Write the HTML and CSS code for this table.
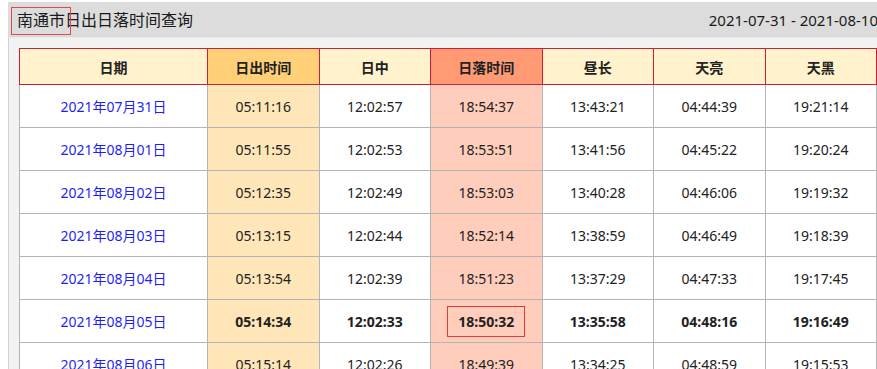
FILE: index.html
```html
<!DOCTYPE html>
<html lang="zh-CN">
<head>
<meta charset="utf-8">
<title>南通市日出日落时间查询</title>
<link rel="stylesheet" href="styles.css">
</head>
<body>
<div class="page">
  <div class="bar">
    <h1 class="title"><span class="city">南通市</span>日出日落时间查询</h1>
    <div class="range">2021-07-31 - 2021-08-10</div>
  </div>
  <div class="content">
    <table class="sun">
      <colgroup>
        <col class="c-date"><col><col><col><col><col><col>
      </colgroup>
      <thead>
        <tr>
          <th>日期</th>
          <th class="rise">日出时间</th>
          <th>日中</th>
          <th class="set">日落时间</th>
          <th>昼长</th>
          <th>天亮</th>
          <th>天黑</th>
        </tr>
      </thead>
      <tbody>
        <tr><td class="date">2021年07月31日</td><td class="rise">05:11:16</td><td>12:02:57</td><td class="set">18:54:37</td><td>13:43:21</td><td>04:44:39</td><td>19:21:14</td></tr>
        <tr><td class="date">2021年08月01日</td><td class="rise">05:11:55</td><td>12:02:53</td><td class="set">18:53:51</td><td>13:41:56</td><td>04:45:22</td><td>19:20:24</td></tr>
        <tr><td class="date">2021年08月02日</td><td class="rise">05:12:35</td><td>12:02:49</td><td class="set">18:53:03</td><td>13:40:28</td><td>04:46:06</td><td>19:19:32</td></tr>
        <tr><td class="date">2021年08月03日</td><td class="rise">05:13:15</td><td>12:02:44</td><td class="set">18:52:14</td><td>13:38:59</td><td>04:46:49</td><td>19:18:39</td></tr>
        <tr><td class="date">2021年08月04日</td><td class="rise">05:13:54</td><td>12:02:39</td><td class="set">18:51:23</td><td>13:37:29</td><td>04:47:33</td><td>19:17:45</td></tr>
        <tr class="today"><td class="date">2021年08月05日</td><td class="rise">05:14:34</td><td>12:02:33</td><td class="set"><span class="mark">18:50:32</span></td><td>13:35:58</td><td>04:48:16</td><td>19:16:49</td></tr>
        <tr><td class="date">2021年08月06日</td><td class="rise">05:15:14</td><td>12:02:26</td><td class="set">18:49:39</td><td>13:34:25</td><td>04:48:59</td><td>19:15:53</td></tr>
      </tbody>
    </table>
  </div>
</div>
</body>
</html>
```

FILE: styles.css
```css
html, body {
  margin: 0;
  padding: 0;
  background: #ffffff;
  font-family: "Noto Sans", "Noto Sans CJK SC", sans-serif;
  color: #222222;
  overflow: hidden;
}

.page {
  padding: 2px 0 0 8px;
}

.bar {
  height: 35px;
  background: #dcdcdc;
  display: flex;
  align-items: center;
  justify-content: space-between;
  padding-left: 9px;
  white-space: nowrap;
}

.title {
  margin: 0;
  font-size: 16px;
  font-weight: normal;
  line-height: 20px;
  color: #1a1a1a;
}

.city {
  position: relative;
}

.city::after {
  content: "";
  position: absolute;
  left: -6px;
  top: -2px;
  width: 58px;
  height: 26px;
  border: 1px solid #e04a4a;
}

.range {
  font-size: 15px;
  line-height: 20px;
  color: #1a1a1a;
  margin-right: -1px;
}

.content {
  background: #f2f2f2;
  border-left: 1px solid #d2d2d2;
  border-top: 1px solid #e8e8e8;
  padding: 10px 0 0 10px;
  height: 400px;
}

.sun {
  width: 858px;
  table-layout: fixed;
  border-collapse: collapse;
  background: #ffffff;
  font-size: 14px;
}

.c-date {
  width: 188px;
}

.sun th {
  height: 35px;
  padding: 0;
  background: #fff2cc;
  border: 1px solid #c8203a;
  font-weight: bold;
  color: #222222;
  text-align: center;
}

.sun th.rise {
  background: #ffd078;
}

.sun th.set {
  background: #ff9a74;
}

.sun td {
  height: 42px;
  padding: 0;
  border: 1px solid #b4b4b4;
  text-align: center;
  color: #222222;
}

.sun td.date {
  color: #1f1ff5;
}

.sun td.rise {
  background: #ffe6b8;
}

.sun td.set {
  background: #ffcdbb;
}

.today td {
  font-weight: bold;
}

.today td.date {
  font-weight: normal;
}

.mark {
  display: inline-block;
  padding: 0 10px;
  line-height: 29px;
  border: 1px solid #e53a3a;
}
```
